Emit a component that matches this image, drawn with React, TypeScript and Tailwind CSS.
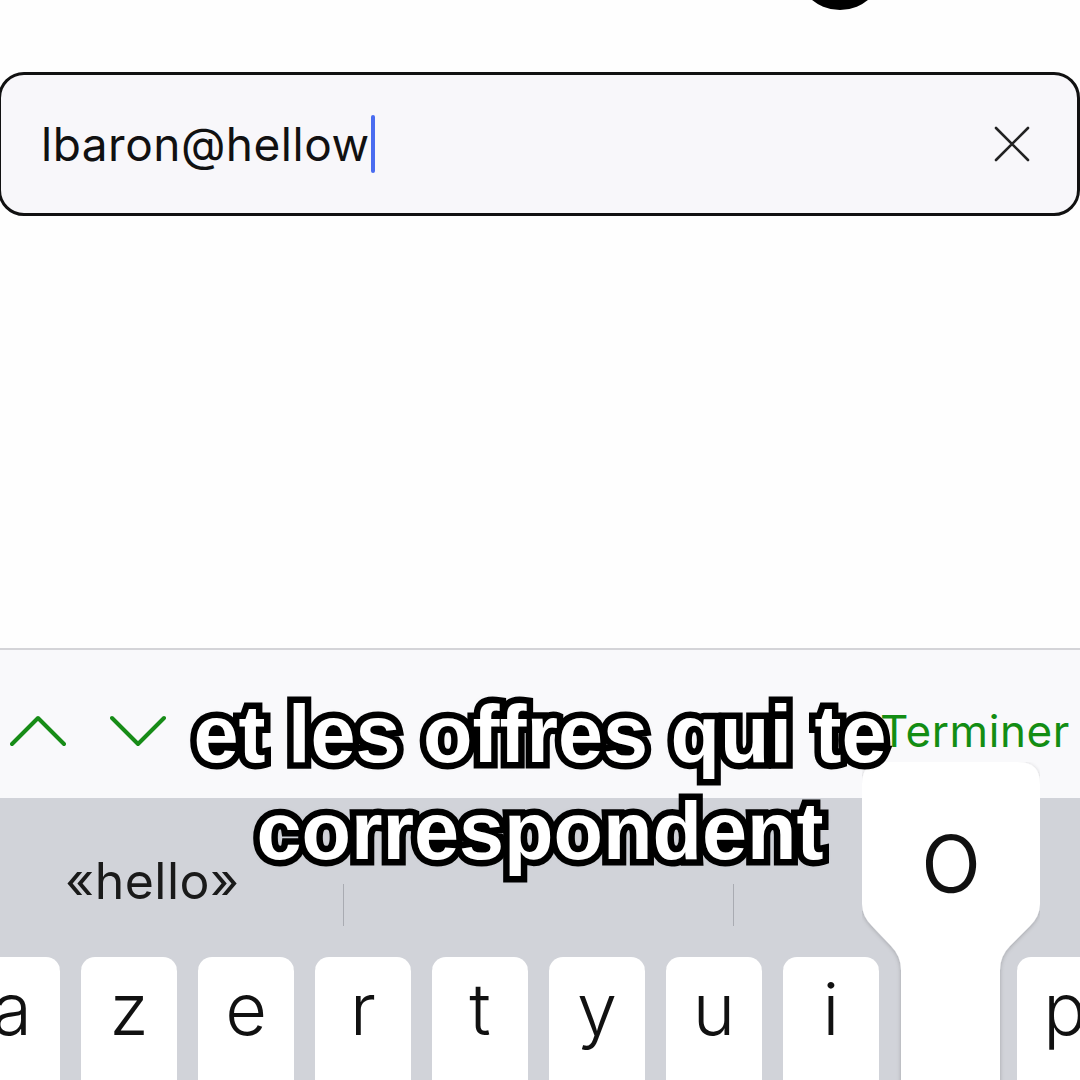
import * as React from 'react'

const keys = ['a', 'z', 'e', 'r', 't', 'y', 'u', 'i', '', 'p']

function ChevronUp() {
  return (
    <svg width="56" height="34" viewBox="0 0 56 34" fill="none">
      <path d="M2 30 L28 4 L54 30" stroke="#178c17" strokeWidth="4" strokeLinecap="round" strokeLinejoin="round" />
    </svg>
  )
}

function ChevronDown() {
  return (
    <svg width="56" height="34" viewBox="0 0 56 34" fill="none">
      <path d="M2 4 L28 30 L54 4" stroke="#178c17" strokeWidth="4" strokeLinecap="round" strokeLinejoin="round" />
    </svg>
  )
}

function KeyPopup() {
  return (
    <svg className="absolute inset-0" width="178" height="318" viewBox="0 0 178 318">
      <defs>
        <filter id="ks" x="-10%" y="-10%" width="120%" height="120%">
          <feDropShadow dx="0" dy="1" stdDeviation="2" floodColor="#000" floodOpacity="0.22" />
        </filter>
      </defs>
      <path
        d="M22 0 H156 Q178 0 178 22 V142 Q178 154 168 164 L148 184 Q138 194 138 208 V330 H39 V208 Q39 194 29 184 L10 164 Q0 154 0 142 V22 Q0 0 22 0 Z"
        fill="#fff"
        filter="url(#ks)"
      />
    </svg>
  )
}

export default function App() {
  return (
    <div className="relative w-[1080px] h-[1080px] overflow-hidden bg-[#fefefe] font-['Inter','Liberation_Sans',sans-serif]">
      {/* Top area with search field */}
      <div className="relative h-[648px]">
        <div className="absolute left-[796px] top-[-78px] w-[88px] h-[88px] rounded-full bg-black" />
        <div className="pt-[72px] ml-[-2px]">
          <div className="w-[1082px] h-[144px] rounded-[26px] border-[3px] border-[#111] bg-[#f8f7fa] flex items-center pl-[40px] pr-[46px]">
            <span className="text-[46px] leading-none text-[#111] tracking-[0.5px]">lbaron@hellow</span>
            <span className="ml-[1px] w-[4px] h-[58px] rounded-full bg-[#4a6cf0]" />
            <div className="flex-1" />
            <svg width="38" height="38" viewBox="0 0 38 38">
              <path d="M3 3 L35 35 M35 3 L3 35" stroke="#222" strokeWidth="2.6" strokeLinecap="round" />
            </svg>
          </div>
        </div>
      </div>

      {/* Toolbar */}
      <div className="h-[150px] border-t-2 border-[#d4d4d8] bg-[#f9f9fb] flex items-center pl-[10px] pr-[10px] pt-[14px]">
        <ChevronUp />
        <div className="ml-[44px]">
          <ChevronDown />
        </div>
        <div className="flex-1" />
        <span className="text-[44px] leading-none text-[#138d13] tracking-[0.6px]">Terminer</span>
      </div>

      {/* Keyboard */}
      <div className="h-[282px] bg-[#d1d3d9]">
        <div className="h-[159px] flex items-center pt-[6px]">
          <div className="w-[343px] pl-[65px]">
            <span className="text-[50px] leading-none text-[#1a1a1a] tracking-[0.5px]">«hello»</span>
          </div>
          <div className="w-[1px] h-[42px] mt-[48px] bg-[#a9abb2]" />
          <div className="w-[389px]" />
          <div className="w-[1px] h-[42px] mt-[48px] bg-[#a9abb2]" />
        </div>
        <div className="flex gap-[21px] ml-[-36px]">
          {keys.map((k, i) => (
            <div
              key={i}
              className={
                k
                  ? 'w-[96px] h-[140px] shrink-0 rounded-[14px] bg-white shadow-[0_2px_0_#8f9198] flex justify-center pt-[16px]'
                  : 'w-[96px] h-[140px] shrink-0'
              }
            >
              <span className="text-[72px] leading-none text-[#111] font-light">{k}</span>
            </div>
          ))}
        </div>
      </div>

      {/* Key popup */}
      <div className="absolute left-[862px] top-[762px] w-[178px] h-[318px] flex justify-center">
        <KeyPopup />
        <span className="relative mt-[40px] text-[104px] leading-none h-[104px] text-[#111] font-light">o</span>
      </div>

      {/* Subtitle */}
      <div className="absolute left-0 right-0 top-[686px] flex flex-col items-center text-center font-['Liberation_Sans',sans-serif] font-bold text-[81px] leading-[97px] text-white tracking-[0px] [paint-order:stroke_fill] [-webkit-text-stroke:13px_#000] [text-shadow:0_0_7px_rgba(0,0,0,0.6)]">
        <span>et les offres qui te</span>
        <span>correspondent</span>
      </div>
    </div>
  )
}
